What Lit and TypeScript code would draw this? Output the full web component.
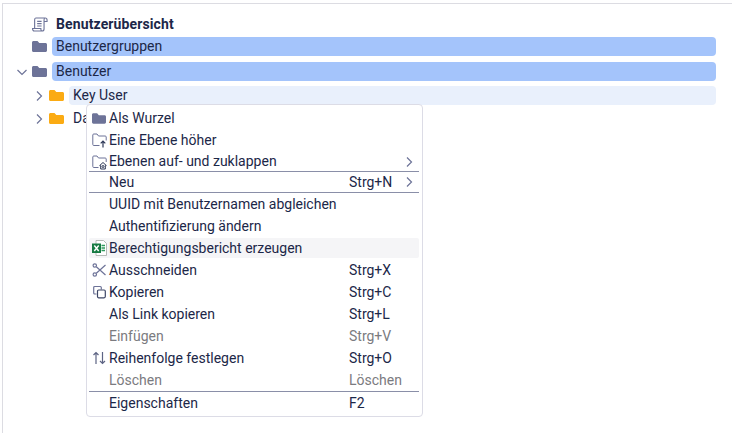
import { LitElement, html, css, svg } from 'lit';
import { customElement } from 'lit/decorators.js';
import { classMap } from 'lit/directives/class-map.js';

const folderPath = 'M0 1.500C0 .7.7 0 1.500 0h4L7.300 2h6.200c.8 0 1.500.7 1.500 1.500v6c0 .8-.7 1.500-1.500 1.500h-12C.7 11 0 10.300 0 9.500z';

const folder = (cls: string) => html`<svg class=${cls} viewBox="0 0 15 11"><path d=${folderPath} fill="currentColor"></path></svg>`;

const chevron = (dir: 'right' | 'down') =>
  html`<svg class="chev" viewBox="0 0 10 10">
    <path d=${dir === 'right' ? 'M3 .5 7.500 5 3 9.500' : 'M.5 3 5 7.500 9.500 3'} fill="none" stroke="currentColor" stroke-width="1.200"></path>
  </svg>`;

const icons: Record<string, unknown> = {
  folder: folder('mi-folder'),
  up: html`<svg class="mi" viewBox="0 0 15 16" fill="none" stroke="#6d7398" stroke-width="1">
    <path d="M7.500 13.500H1.800a1 1 0 0 1-1-1V3a1 1 0 0 1 1-1H5l1.500 2h6.700a1 1 0 0 1 1 1v3.500"></path>
    <path d="M11 15.500V9M8.700 11.300 11 9l2.300 2.300" stroke="#2d3757" stroke-width="1.200"></path>
  </svg>`,
  toggle: html`<svg class="mi" viewBox="0 0 15 16" fill="none" stroke="#6d7398" stroke-width="1">
    <path d="M6.500 13.500H1.800a1 1 0 0 1-1-1V3a1 1 0 0 1 1-1H5l1.500 2h6.700a1 1 0 0 1 1 1v3"></path>
    <path d="M11 8.500l3.300 3-1 .2v3.300H8.700v-3.300l-1-.2z" stroke="#2d3757" stroke-width="1"></path>
    <circle cx="11" cy="12.500" r="1" stroke="#2d3757"></circle>
  </svg>`,
  excel: html`<svg class="mi" viewBox="0 0 15 16">
    <path d="M4 .5h7.500l3 3v12H4z" fill="#fff" stroke="#a3aaa6" stroke-width=".8"></path>
    <path d="M9.500 5.500h3.500M9.500 8h3.500M9.500 10.500h3.500" stroke="#2f9a5e" stroke-width="1.300"></path>
    <rect x="0" y="3.500" width="9" height="9.500" fill="#157a42"></rect>
    <path d="M2.300 5.500 6.700 11M6.700 5.500 2.300 11" stroke="#fff" stroke-width="1.400"></path>
  </svg>`,
  cut: html`<svg class="mi" viewBox="0 0 15 16" fill="none" stroke="#6d7398" stroke-width="1.200">
    <path d="M4.300 4.800 13.500 13M4.300 11.200 13.500 3"></path>
    <circle cx="2.800" cy="3.500" r="1.700"></circle>
    <circle cx="2.800" cy="12.500" r="1.700"></circle>
  </svg>`,
  copy: html`<svg class="mi" viewBox="0 0 15 16" fill="none" stroke="#6d7398" stroke-width="1.200">
    <path d="M4.500 10H2.700a1 1 0 0 1-1-1V3.500a1 1 0 0 1 1-1h5.600a1 1 0 0 1 1 1v2"></path>
    <rect x="5.500" y="6" width="7.800" height="7.800" rx="1.200" stroke="#3d4666"></rect>
  </svg>`,
  sort: html`<svg class="mi" viewBox="0 0 15 16" fill="none" stroke="#5d6484" stroke-width="1.200">
    <path d="M4 14V2.500M1.500 5 4 2.500 6.500 5"></path>
    <path d="M10.500 2v11.500M8 11l2.500 2.500L13 11"></path>
  </svg>`,
};

const scrollIcon = svg`<path d="M4 1h10c1.300 0 2 .8 2 2v1.500h-3M4 1C3 1 2.800 2 2.800 3v8M14 1c-1 0-1.200.9-1.200 2v9c0 1.300-1 2-2.100 2H2.500C1.300 14 .6 13.200 .6 11.500h8.800c0 1.400.3 2.500 1.300 2.500M5.500 4.300h4.700M5.500 6.700h4.700M5.500 9h4.700" fill="none" stroke="#6d7398" stroke-width="1.200"></path>`;

interface Item {
  label: string;
  icon?: string;
  key?: string;
  more?: boolean;
  off?: boolean;
  hot?: boolean;
  sep?: string;
  short?: boolean;
}

const items: Item[] = [
  { label: 'Als Wurzel', icon: 'folder' },
  { label: 'Eine Ebene höher', icon: 'up' },
  { label: 'Ebenen auf- und zuklappen', icon: 'toggle', more: true, short: true },
  { label: 'Neu', key: 'Strg+N', more: true, sep: 's1' },
  { label: 'UUID mit Benutzernamen abgleichen', sep: 's2' },
  { label: 'Authentifizierung ändern' },
  { label: 'Berechtigungsbericht erzeugen', icon: 'excel', hot: true },
  { label: 'Ausschneiden', icon: 'cut', key: 'Strg+X' },
  { label: 'Kopieren', icon: 'copy', key: 'Strg+C' },
  { label: 'Als Link kopieren', key: 'Strg+L' },
  { label: 'Einfügen', key: 'Strg+V', off: true },
  { label: 'Reihenfolge festlegen', icon: 'sort', key: 'Strg+O' },
  { label: 'Löschen', key: 'Löschen', off: true },
  { label: 'Eigenschaften', key: 'F2', sep: 's3' },
];

@customElement('app-root')
export class AppRoot extends LitElement {
  static styles = css`
    :host {
      display: block;
      position: relative;
      width: 732px;
      height: 433px;
      overflow: hidden;
      background: #fff;
      font: 14px/19px Roboto, sans-serif;
      color: #1c2748;
    }
    .panel {
      box-sizing: border-box;
      height: 430px;
      margin: 3px 0 0 2px;
      border-top: 1px solid #dcdce2;
      border-left: 1px solid #dcdce2;
      padding: 11px 16px 0 0;
      display: flex;
      flex-direction: column;
    }
    .row {
      display: flex;
      align-items: center;
      height: 19px;
    }
    .row .chev {
      width: 10px;
      height: 10px;
      color: #6d7398;
      flex: none;
    }
    .lvl0 { padding-left: 14px; }
    .lvl1 { padding-left: 31px; }
    .g3 { margin-top: 3px; }
    .g4 { margin-top: 4px; }
    .g5 { margin-top: 5px; }
    .g6 { margin-top: 6px; }
    .slot {
      width: 10px;
      flex: none;
    }
    .tree-folder {
      width: 15px;
      height: 11px;
      margin-left: 5px;
      flex: none;
      color: #6d7398;
    }
    .tree-folder.orange { color: #fbab13; }
    .scroll {
      width: 16px;
      height: 15px;
      margin-left: 5px;
      margin-right: -1px;
      flex: none;
    }
    .label {
      flex: 1;
      height: 19px;
      margin-left: 5px;
      padding-left: 4px;
      border-radius: 4px;
    }
    .row.sel .label { background: #a4c4fb; }
    .row.hover .label { background: #e9f0fc; }
    .row.head .label {
      font-weight: 700;
      letter-spacing: .12px;
    }
    .menu {
      position: absolute;
      left: 86px;
      top: 104px;
      width: 337px;
      height: 313px;
      box-sizing: border-box;
      background: #fff;
      border: 1px solid #dcdce6;
      border-radius: 4px;
      padding: 3px 3px 0 2px;
    }
    .item {
      display: grid;
      grid-template-columns: 17px 240px 50px 1fr;
      align-items: center;
      height: 20px;
      margin-top: 2px;
      padding-left: 3px;
      border-radius: 2px;
      white-space: nowrap;
    }
    .item.first { margin-top: 0; }
    .item.short { height: 19px; }
    .item.hot { background: #f5f5f7; }
    .item.off { color: #7b7b80; }
    .sep {
      height: 1px;
      background: #8a8fa8;
    }
    .s1 { margin: 0 0 -2px; }
    .s2 { margin: 0 0 -1px; }
    .s3 { margin: 1px 0 -1px; }
    .item .chev {
      width: 10px;
      height: 10px;
      color: #6d7398;
      justify-self: end;
      margin-right: 5px;
    }
    .mi {
      display: block;
      width: 15px;
      height: 16px;
    }
    .mi-folder {
      display: block;
      width: 14px;
      height: 11px;
      color: #6d7398;
    }
  `;

  renderItem(it: Item, i: number) {
    return html`
      ${it.sep ? html`<div class="sep ${it.sep}"></div>` : ''}
      <div class=${classMap({ item: true, first: i === 0, hot: !!it.hot, off: !!it.off, short: !!it.short })}>
        <span>${it.icon ? icons[it.icon] : ''}</span>
        <span>${it.label}</span>
        <span>${it.key ?? ''}</span>
        ${it.more ? chevron('right') : ''}
      </div>
    `;
  }

  render() {
    return html`
      <div class="panel">
        <div class="row head lvl0">
          <span class="slot"></span>
          <svg class="scroll" viewBox="0 0 17 15" preserveAspectRatio="none">${scrollIcon}</svg>
          <span class="label">Benutzerübersicht</span>
        </div>
        <div class="row sel lvl0 g3">
          <span class="slot"></span>
          ${folder('tree-folder')}
          <span class="label">Benutzergruppen</span>
        </div>
        <div class="row sel lvl0 g6">
          ${chevron('down')}
          ${folder('tree-folder')}
          <span class="label">Benutzer</span>
        </div>
        <div class="row hover lvl1 g5">
          ${chevron('right')}
          ${folder('tree-folder orange')}
          <span class="label">Key User</span>
        </div>
        <div class="row lvl1 g4">
          ${chevron('right')}
          ${folder('tree-folder orange')}
          <span class="label">Daten</span>
        </div>
      </div>
      <div class="menu">${items.map((it, i) => this.renderItem(it, i))}</div>
    `;
  }
}
